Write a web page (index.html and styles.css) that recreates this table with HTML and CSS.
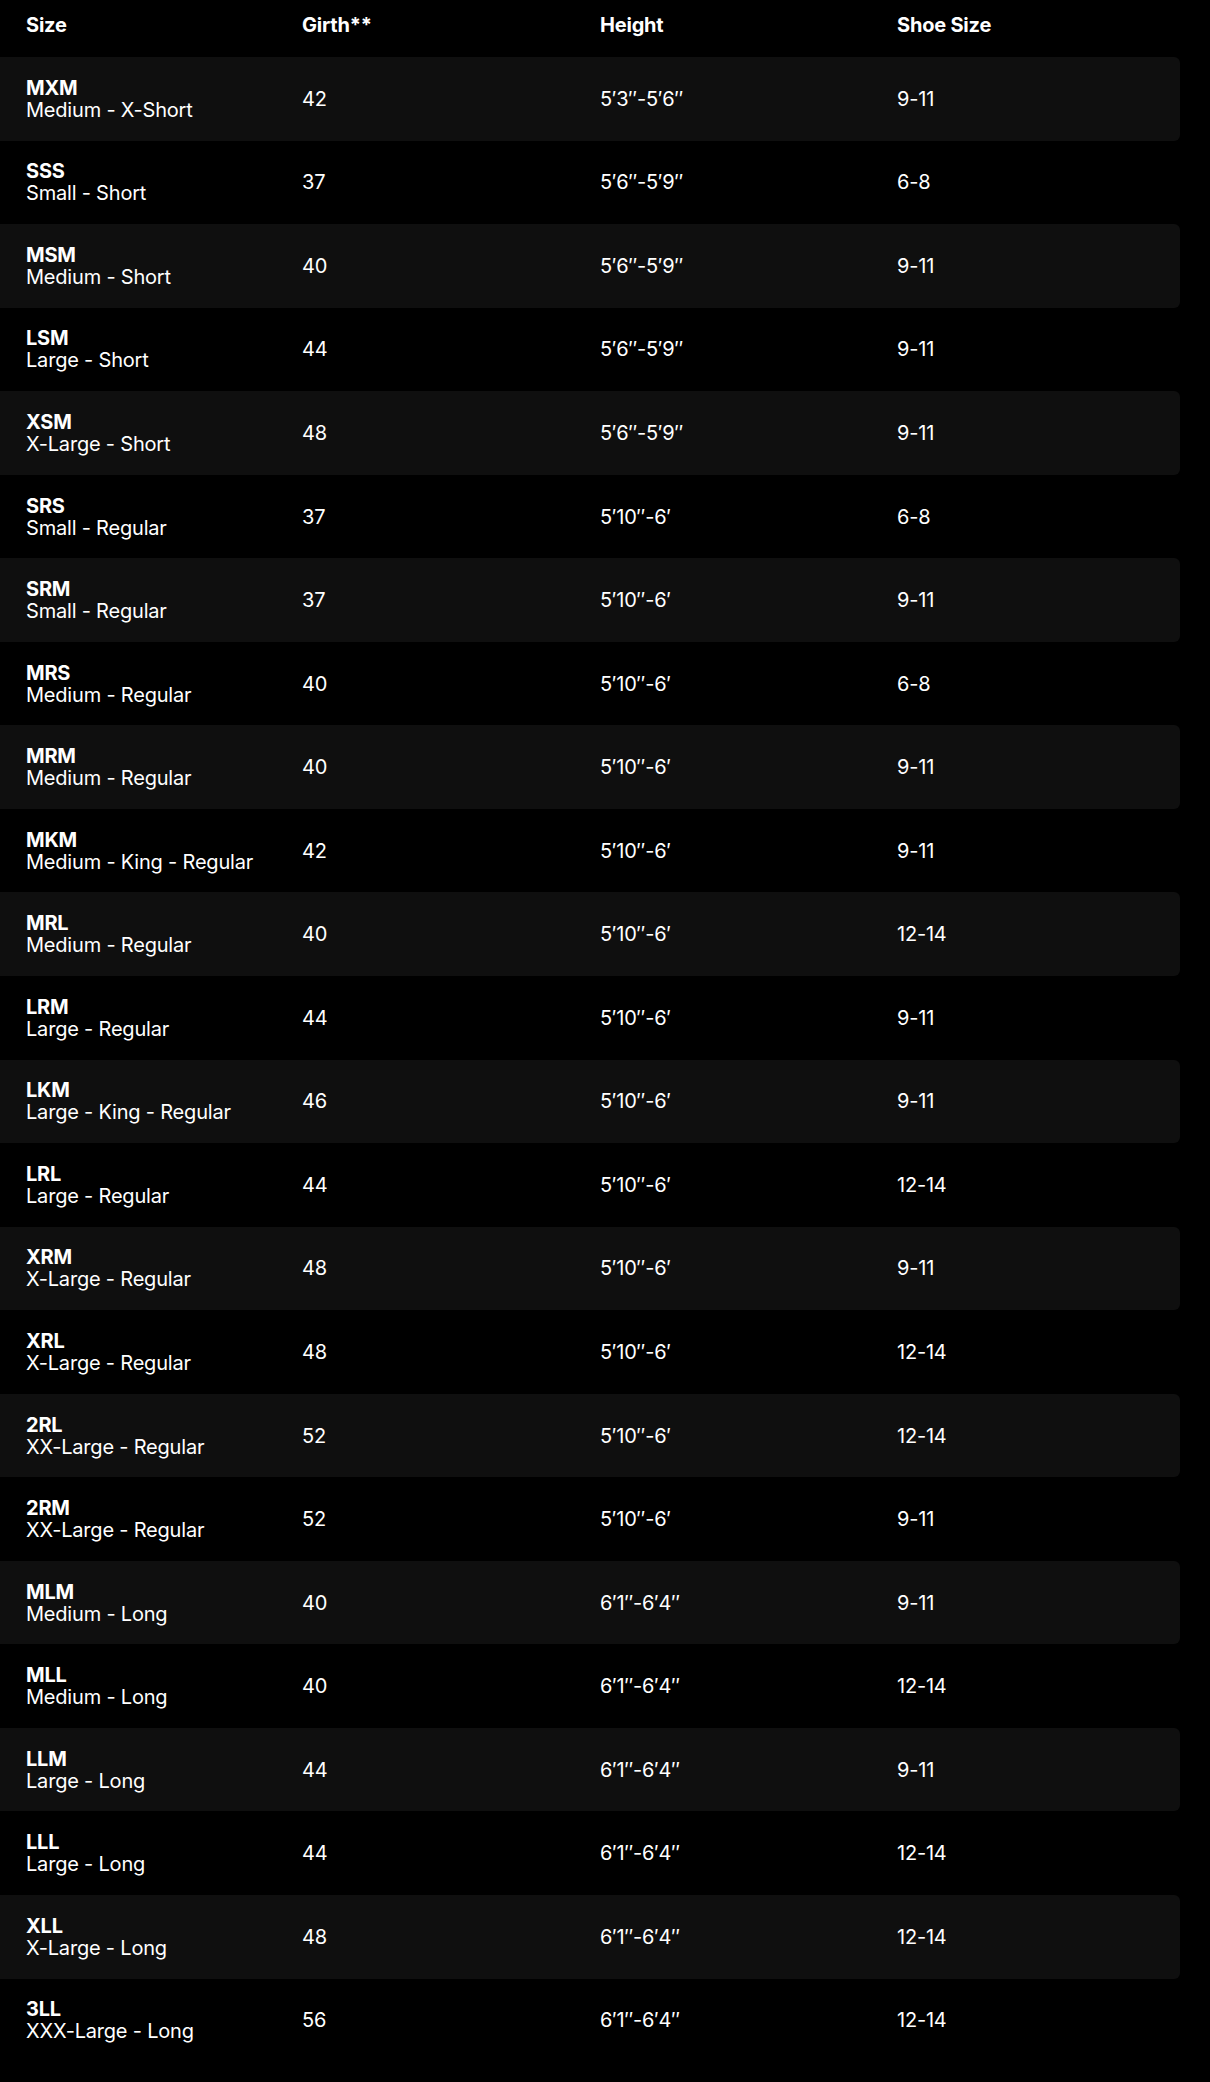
FILE: index.html
```html
<!DOCTYPE html>
<html lang="en">
<head>
<meta charset="utf-8">
<title>Size Chart</title>
<link rel="stylesheet" href="styles.css">
</head>
<body>
<div class="chart">
  <div class="row head">
    <div class="cell">Size</div>
    <div class="cell">Girth**</div>
    <div class="cell">Height</div>
    <div class="cell">Shoe Size</div>
  </div>
  <div class="row shade"><div class="cell"><b>MXM</b><span>Medium - X-Short</span></div><div class="cell">42</div><div class="cell">5′3″-5′6″</div><div class="cell">9-11</div></div>
  <div class="row"><div class="cell"><b>SSS</b><span>Small - Short</span></div><div class="cell">37</div><div class="cell">5′6″-5′9″</div><div class="cell">6-8</div></div>
  <div class="row shade"><div class="cell"><b>MSM</b><span>Medium - Short</span></div><div class="cell">40</div><div class="cell">5′6″-5′9″</div><div class="cell">9-11</div></div>
  <div class="row"><div class="cell"><b>LSM</b><span>Large - Short</span></div><div class="cell">44</div><div class="cell">5′6″-5′9″</div><div class="cell">9-11</div></div>
  <div class="row shade"><div class="cell"><b>XSM</b><span>X-Large - Short</span></div><div class="cell">48</div><div class="cell">5′6″-5′9″</div><div class="cell">9-11</div></div>
  <div class="row"><div class="cell"><b>SRS</b><span>Small - Regular</span></div><div class="cell">37</div><div class="cell">5′10″-6′</div><div class="cell">6-8</div></div>
  <div class="row shade"><div class="cell"><b>SRM</b><span>Small - Regular</span></div><div class="cell">37</div><div class="cell">5′10″-6′</div><div class="cell">9-11</div></div>
  <div class="row"><div class="cell"><b>MRS</b><span>Medium - Regular</span></div><div class="cell">40</div><div class="cell">5′10″-6′</div><div class="cell">6-8</div></div>
  <div class="row shade"><div class="cell"><b>MRM</b><span>Medium - Regular</span></div><div class="cell">40</div><div class="cell">5′10″-6′</div><div class="cell">9-11</div></div>
  <div class="row"><div class="cell"><b>MKM</b><span>Medium - King - Regular</span></div><div class="cell">42</div><div class="cell">5′10″-6′</div><div class="cell">9-11</div></div>
  <div class="row shade"><div class="cell"><b>MRL</b><span>Medium - Regular</span></div><div class="cell">40</div><div class="cell">5′10″-6′</div><div class="cell">12-14</div></div>
  <div class="row"><div class="cell"><b>LRM</b><span>Large - Regular</span></div><div class="cell">44</div><div class="cell">5′10″-6′</div><div class="cell">9-11</div></div>
  <div class="row shade"><div class="cell"><b>LKM</b><span>Large - King - Regular</span></div><div class="cell">46</div><div class="cell">5′10″-6′</div><div class="cell">9-11</div></div>
  <div class="row"><div class="cell"><b>LRL</b><span>Large - Regular</span></div><div class="cell">44</div><div class="cell">5′10″-6′</div><div class="cell">12-14</div></div>
  <div class="row shade"><div class="cell"><b>XRM</b><span>X-Large - Regular</span></div><div class="cell">48</div><div class="cell">5′10″-6′</div><div class="cell">9-11</div></div>
  <div class="row"><div class="cell"><b>XRL</b><span>X-Large - Regular</span></div><div class="cell">48</div><div class="cell">5′10″-6′</div><div class="cell">12-14</div></div>
  <div class="row shade"><div class="cell"><b>2RL</b><span>XX-Large - Regular</span></div><div class="cell">52</div><div class="cell">5′10″-6′</div><div class="cell">12-14</div></div>
  <div class="row"><div class="cell"><b>2RM</b><span>XX-Large - Regular</span></div><div class="cell">52</div><div class="cell">5′10″-6′</div><div class="cell">9-11</div></div>
  <div class="row shade"><div class="cell"><b>MLM</b><span>Medium - Long</span></div><div class="cell">40</div><div class="cell">6′1″-6′4″</div><div class="cell">9-11</div></div>
  <div class="row"><div class="cell"><b>MLL</b><span>Medium - Long</span></div><div class="cell">40</div><div class="cell">6′1″-6′4″</div><div class="cell">12-14</div></div>
  <div class="row shade"><div class="cell"><b>LLM</b><span>Large - Long</span></div><div class="cell">44</div><div class="cell">6′1″-6′4″</div><div class="cell">9-11</div></div>
  <div class="row"><div class="cell"><b>LLL</b><span>Large - Long</span></div><div class="cell">44</div><div class="cell">6′1″-6′4″</div><div class="cell">12-14</div></div>
  <div class="row shade"><div class="cell"><b>XLL</b><span>X-Large - Long</span></div><div class="cell">48</div><div class="cell">6′1″-6′4″</div><div class="cell">12-14</div></div>
  <div class="row"><div class="cell"><b>3LL</b><span>XXX-Large - Long</span></div><div class="cell">56</div><div class="cell">6′1″-6′4″</div><div class="cell">12-14</div></div>
</div>
</body>
</html>
```
FILE: styles.css
```css
html, body {
  margin: 0;
  padding: 0;
  background: #000;
}
body {
  color: #fff;
  font-family: Inter, "Liberation Sans", sans-serif;
  font-size: 20px;
  letter-spacing: -0.2px;
}
.chart {
  width: 1180px;
  padding-bottom: 20px;
}
.row {
  display: grid;
  grid-template-columns: 276px 298px 297px 1fr;
  align-items: center;
  height: 83.55px;
}
.row.head {
  height: 57px;
  align-items: start;
  padding-top: 14px;
  box-sizing: border-box;
  font-weight: 700;
}
.row.shade {
  background: #0f0f0f;
  border-radius: 0 6px 6px 0;
}
.cell {
  padding-left: 26px;
  line-height: 22px;
}
.cell b {
  display: block;
  font-weight: 700;
}
.cell span {
  display: block;
  font-weight: 400;
}
```
